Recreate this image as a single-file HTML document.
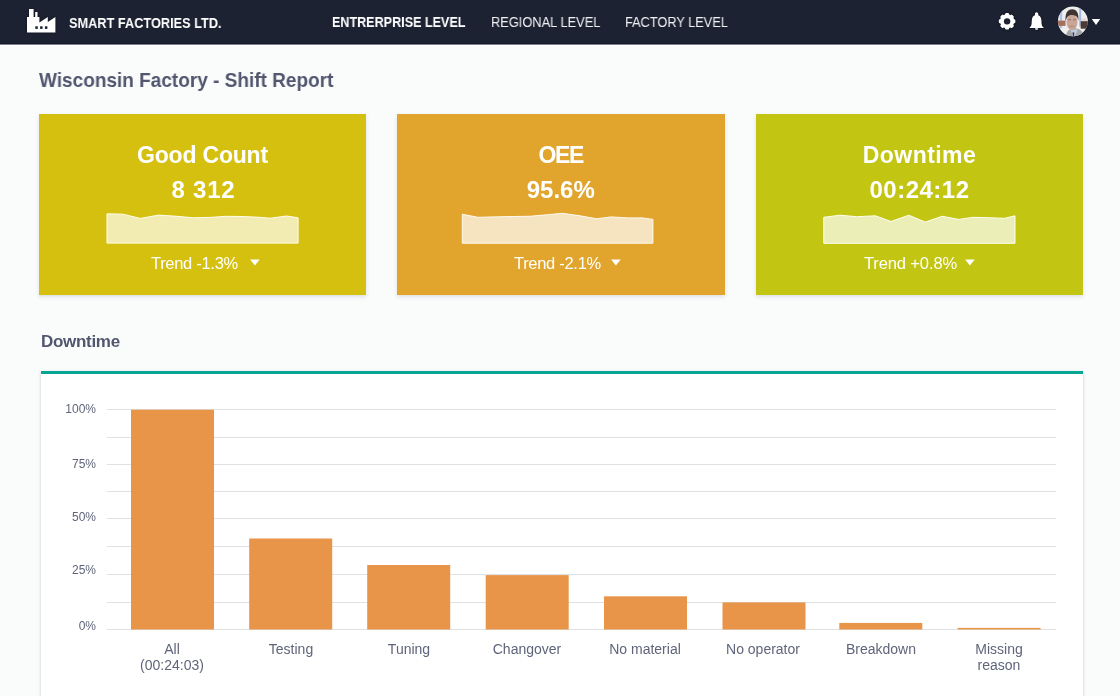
<!DOCTYPE html>
<html><head><meta charset="utf-8">
<style>
*{margin:0;padding:0;box-sizing:border-box}
html,body{width:1120px;height:696px;overflow:hidden;background:#fafcfb;font-family:"Liberation Sans",sans-serif}
.a{position:absolute;white-space:nowrap;line-height:1;will-change:transform}
#hdr{position:absolute;left:0;top:0;width:1120px;height:44px;background:#1d2232;border-bottom:1px solid #111826}
#hdrw{position:absolute;left:0;top:44px;width:1120px;height:2px;background:#fff;border-top:1px solid #7d818b}
.nav{color:#fff;font-size:14px}
.card{position:absolute;top:114px;height:181px;box-shadow:0 2px 4px rgba(40,50,90,.14)}
.ct{color:#fff;font-weight:bold;font-size:24px;text-align:center;width:100%}
.tr{color:#fff;font-size:16.5px;letter-spacing:-0.3px}
#panel{position:absolute;left:41px;top:371px;width:1042px;height:340px;background:#fff;border-top:3px solid #05a794;box-shadow:0 1px 3px rgba(20,30,50,.22)}
.yl{font-size:12px;color:#60647a;text-align:right;width:40px}
.xl{font-size:14px;color:#60647a;text-align:center;width:118px;line-height:16px}
</style></head><body>
<div id="hdr"></div><div id="hdrw"></div>
<!-- factory icon -->
<svg class="a" style="left:0;top:0;filter:drop-shadow(0 0 .8px rgba(0,0,0,.6))" width="120" height="44" viewBox="0 0 120 44">
<path fill="#fff" d="M29 9h4.6v8H35.2v-5h2.3v5h1.9v5.5L47.8 17v5.1L55.4 17v15.5H27V17H29z"/>
<rect x="35.3" y="26.3" width="2.5" height="2.6" fill="#1d2232"/>
<rect x="40.1" y="26.3" width="2.5" height="2.6" fill="#1d2232"/>
<rect x="44.9" y="26.3" width="2.5" height="2.6" fill="#1d2232"/>
</svg>
<div class="a nav" id="brand" style="left:69px;top:15px;font-size:15px;font-weight:bold;transform:scaleX(.85);transform-origin:0 0">SMART FACTORIES LTD.</div>
<div class="a nav" id="n1" style="left:332px;top:14.5px;font-weight:bold;transform:scaleX(.898);transform-origin:0 0">ENTRERPRISE LEVEL</div>
<div class="a nav" id="n2" style="left:491px;top:14.5px;color:#f0f1f4;transform:scaleX(.917);transform-origin:0 0">REGIONAL LEVEL</div>
<div class="a nav" id="n3" style="left:625px;top:14.5px;color:#f0f1f4;transform:scaleX(.912);transform-origin:0 0">FACTORY LEVEL</div>
<!-- gear -->
<svg class="a" style="left:996px;top:11px;filter:drop-shadow(0 0 .8px rgba(0,0,0,.7))" width="22" height="21" viewBox="0 0 22 21">
<g fill="#fff" transform="translate(11.1 10.35)">
<circle r="7.1"/>
<rect x="-2" y="-8.25" width="4" height="16.5" rx="1.1"/>
<rect x="-2" y="-8.25" width="4" height="16.5" rx="1.1" transform="rotate(45)"/>
<rect x="-2" y="-8.25" width="4" height="16.5" rx="1.1" transform="rotate(90)"/>
<rect x="-2" y="-8.25" width="4" height="16.5" rx="1.1" transform="rotate(135)"/>
</g>
<circle cx="11.1" cy="10.35" r="3.2" fill="#1d2232"/>
</svg>
<!-- bell -->
<svg class="a" style="left:1026px;top:11px;filter:drop-shadow(0 0 .8px rgba(0,0,0,.7))" width="22" height="21" viewBox="0 0 22 21">
<path fill="#fff" d="M10.6 1.3C11.5 1.3 12.1 2 12.2 3L12.3 4.3C14.5 5.1 15.3 7.1 15.4 9.5L15.6 12.7C15.8 14.5 16.4 15.5 17.5 16.3V16.9H3.7V16.3C4.8 15.5 5.4 14.5 5.6 12.7L5.8 9.5C5.9 7.1 6.7 5.1 8.9 4.3L9 3C9.1 2 9.7 1.3 10.6 1.3Z"/>
<path fill="#fff" d="M9 17.3H12.2C12.2 18.3 11.5 18.8 10.6 18.8S9 18.3 9 17.3Z"/>
</svg>
<!-- avatar -->
<svg class="a" style="left:1056px;top:5px" width="34" height="33" viewBox="0 0 34 33">
<defs><clipPath id="cc"><circle cx="16.85" cy="16.35" r="14.95"/></clipPath></defs>
<circle cx="16.85" cy="16.35" r="15.6" fill="#0e1320" opacity=".55"/>
<g clip-path="url(#cc)">
<rect width="34" height="33" fill="#eeeeee"/>
<rect x="3.8" y="6" width="2.4" height="17" fill="#aec2de"/>
<rect x="23.2" y="2" width="2" height="19.5" fill="#a3badc"/>
<rect x="1" y="15.6" width="8.5" height="5.3" fill="#a2705f"/>
<rect x="24.7" y="16.1" width="8" height="7.6" fill="#4e3a34"/>
<rect x="25" y="13.5" width="8" height="2.6" fill="#e6d8d4"/>
<path d="M9.5 34C10 27 12.5 23.5 18 23 23.5 23.5 27.5 26 29.5 34Z" fill="#a4a6a6"/>
<path d="M14.2 24.5H21.8L18.2 34Z" fill="#bccbe0"/>
<path d="M16.4 27.5H18.4L17.6 34Z" fill="#3c3436"/>
<ellipse cx="16" cy="17" rx="5.5" ry="8.2" fill="#c9a697"/>
<path d="M9.6 16.5C8.8 8.5 11.5 4.3 16.2 4.3S23 8.3 22.3 15.8C21.6 12 20.5 10.2 16.3 10S10.4 12.3 9.6 16.5Z" fill="#3e3634"/>
<rect x="12.4" y="14.3" width="2.6" height=".9" fill="#6a5048" opacity=".7"/>
<rect x="17.2" y="14.3" width="2.6" height=".9" fill="#6a5048" opacity=".7"/>
<ellipse cx="16" cy="21.5" rx="3" ry="1.3" fill="#a88476" opacity=".5"/>
</g>
</svg>
<svg class="a" style="left:1091px;top:18px" width="10" height="8" viewBox="0 0 10 8"><path d="M.8 1h8.4L5 7z" fill="#fff"/></svg>

<div class="a" id="title" style="left:39px;top:70.3px;font-size:20.5px;font-weight:bold;color:#52566e;transform:scaleX(.927);transform-origin:0 0">Wisconsin Factory - Shift Report</div>

<!-- cards -->
<div class="card" style="left:39px;width:327px;background:#d5c00f">
  <div class="a ct" style="left:0;top:29.5px;font-size:23px;letter-spacing:-0.2px">Good Count</div>
  <div class="a ct" style="left:0;top:63.8px;letter-spacing:0.75px;left:1px">8 312</div>
  <svg class="a" style="left:0;top:0" width="327" height="181"><path transform="translate(-39 -114)" d="M107 213.8L122.9 214.2 140.3 218.4 158.6 215.1 176.9 216.3 193.4 217.8 209.8 217.4 226.3 216.3 242.8 216.5 259.3 217.3 270.2 218.2 286.7 216 298.1 217.8V243.1H107z" fill="#f2ebb2" stroke="#fffdf0" stroke-width="1"/></svg>
  <div class="a tr" style="left:112px;top:141.3px">Trend -1.3%</div>
  <svg class="a" style="left:211px;top:145px" width="10" height="8"><path d="M.1 .5h9.6L4.9 6.5z" fill="#fff"/></svg>
</div>
<div class="card" style="left:397px;width:327.5px;background:#e1a52d">
  <div class="a ct" style="left:0;top:29.5px;font-size:23px;letter-spacing:-1.3px">OEE</div>
  <div class="a ct" style="left:0;top:64.2px">95.6%</div>
  <svg class="a" style="left:0;top:0" width="327" height="181"><path transform="translate(-397 -114)" d="M462.3 214.2L477.9 217.3 502.9 216.7 530 216.25 546.7 214.8 562.3 213.3 580 215.8 596.7 218.75 611.25 216.9 627.9 217.9 642.5 217.9 652.9 219.4V243.2H462.3z" fill="#f6e4c0" stroke="#fffaf0" stroke-width="1"/></svg>
  <div class="a tr" style="left:117px;top:141.3px">Trend -2.1%</div>
  <svg class="a" style="left:214px;top:145px" width="10" height="8"><path d="M.1 .5h9.6L4.9 6.5z" fill="#fff"/></svg>
</div>
<div class="card" style="left:756px;width:327px;background:#c2c511">
  <div class="a ct" style="left:0;top:29.5px;font-size:23px;letter-spacing:0.45px">Downtime</div>
  <div class="a ct" style="left:0;top:64px;letter-spacing:0.5px">00:24:12</div>
  <svg class="a" style="left:0;top:0" width="327" height="181"><path transform="translate(-756 -114)" d="M823.75 217.3L840 215.2 856.7 216.7 875.4 215.8 891 221.5 908.75 215.2 925.4 222.1 942.1 216.25 958.75 219.4 973.3 217.3 987.9 217.7 1004.6 218.3 1015 215.8V243.3H823.75z" fill="#ebeeb6" stroke="#fdfdf0" stroke-width="1"/></svg>
  <div class="a tr" style="left:108px;top:141.3px;letter-spacing:-0.12px">Trend +0.8%</div>
  <svg class="a" style="left:209px;top:145px" width="10" height="8"><path d="M.1 .5h9.6L4.9 6.5z" fill="#fff"/></svg>
</div>

<div class="a" id="dt" style="left:41px;top:333.3px;font-size:17px;font-weight:bold;color:#52566e;letter-spacing:-0.3px">Downtime</div>

<div id="panel"></div>
<svg class="a" style="left:0;top:0" width="1120" height="696">
<g stroke="#dfe1e5" stroke-width="1" shape-rendering="crispEdges">
<path d="M107 409.5H1056M107 437H1056M107 464.5H1056M107 491.5H1056M107 518.5H1056M107 546.5H1056M107 574.5H1056M107 602H1056M107 629.5H1056"/>
</g>
<g fill="#e8954a">
<rect x="131" y="409.7" width="83" height="219.8"/>
<rect x="249.2" y="538.5" width="83" height="91"/>
<rect x="367.2" y="565" width="83" height="64.5"/>
<rect x="485.7" y="575.1" width="83" height="54.4"/>
<rect x="604" y="596.3" width="83" height="33.2"/>
<rect x="722.5" y="602.4" width="83" height="27.1"/>
<rect x="839.3" y="622.9" width="83" height="6.6"/>
<rect x="957.6" y="627.9" width="83" height="1.6"/>
</g>
</svg>
<div class="a yl" style="left:56px;top:403px">100%</div>
<div class="a yl" style="left:56px;top:458px">75%</div>
<div class="a yl" style="left:56px;top:511px">50%</div>
<div class="a yl" style="left:56px;top:564px">25%</div>
<div class="a yl" style="left:56px;top:620px">0%</div>
<div class="a xl" style="left:113px;top:641px">All<br>(00:24:03)</div>
<div class="a xl" style="left:231.5px;top:641px">Testing</div>
<div class="a xl" style="left:349.6px;top:641px">Tuning</div>
<div class="a xl" style="left:467.7px;top:641px">Changover</div>
<div class="a xl" style="left:585.8px;top:641px">No material</div>
<div class="a xl" style="left:704px;top:641px">No operator</div>
<div class="a xl" style="left:822px;top:641px">Breakdown</div>
<div class="a xl" style="left:940px;top:641px">Missing<br>reason</div>
</body></html>
